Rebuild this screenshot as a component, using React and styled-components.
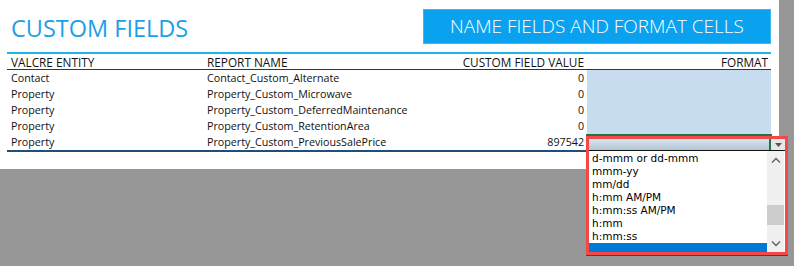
import React from "react";
import styled, { createGlobalStyle } from "styled-components";

const Global = createGlobalStyle`
  html, body { margin: 0; padding: 0; }
  body {
    background: #979797;
    width: 794px;
    height: 266px;
    overflow: hidden;
    font-family: "Open Sans", "Liberation Sans", sans-serif;
  }
`;

const Sheet = styled.div`
  position: relative;
  width: 779px;
  height: 169px;
  background: #ffffff;
`;

const TitleRow = styled.div`
  display: flex;
  align-items: flex-start;
  height: 52px;
  padding-left: 11px;
  padding-right: 8px;
`;

const Title = styled.h1`
  margin: 15px 0 0;
  font-family: "Open Sans", sans-serif;
  font-weight: 400;
  font-size: 23.5px;
  line-height: 26px;
  color: #1d9fe6;
`;

const ActionButton = styled.div`
  margin-left: auto;
  margin-top: 9px;
  width: 348px;
  height: 35px;
  display: flex;
  align-items: center;
  justify-content: center;
  background: #0aa2ef;
  border: 1px solid #3db6f2;
  box-sizing: border-box;
  color: #ffffff;
  font-family: "Open Sans", sans-serif;
  font-size: 19px;
  font-weight: 300;
  padding-bottom: 2px;
`;

const Table = styled.div`
  margin-left: 7px;
  width: 764px;
  border-top: 2px solid #1fb2ec;
  border-bottom: 2px solid #1f4e79;
`;

const Row = styled.div`
  display: grid;
  grid-template-columns: 196px 217px 167px 184px;
  height: ${(p) => (p.head ? "15px" : "16px")};
  border-bottom: ${(p) => (p.head ? "1px solid #1f3b5c" : "none")};
  font-family: "Open Sans", sans-serif;
  font-size: ${(p) => (p.head ? "11.8px" : "10.7px")};
  font-weight: ${(p) => (p.head ? 500 : 400)};
  color: #111;
`;

const Cell = styled.div`
  display: flex;
  align-items: center;
  padding: 0 3px 0 4px;
  white-space: nowrap;
  overflow: hidden;
  justify-content: ${(p) => (p.right ? "flex-end" : "flex-start")};
  background: ${(p) => (p.fill ? "#c7dcee" : "transparent")};
  text-transform: ${(p) => (p.head ? "uppercase" : "none")};
`;

const Callout = styled.div`
  position: absolute;
  left: 586px;
  top: 136px;
  width: 202px;
  height: 119px;
  box-sizing: border-box;
  border: 3px solid #f24848;
  background: #ffffff;
  box-shadow: 0 1px 0 #444;
  display: flex;
  flex-direction: column;
`;

const Selection = styled.div`
  position: absolute;
  left: 586px;
  top: 134px;
  width: 186px;
  height: 17px;
  box-sizing: border-box;
  border: 2px solid #217346;
`;

const Combo = styled.div`
  display: flex;
  height: 11px;
  border-bottom: 1px solid #111;
`;

const ComboField = styled.div`
  position: relative;
  flex: 1;
  background: linear-gradient(#d8e4ee, #b3c5d3);
  border-right: 2px solid #217346;
`;

const ComboArrow = styled.div`
  width: 14px;
  display: flex;
  align-items: center;
  justify-content: center;
  background: #e6e6e6;
`;

const List = styled.div`
  flex: 1;
  display: flex;
  overflow: hidden;
`;

const Items = styled.div`
  flex: 1;
  padding-top: 1px;
  overflow: hidden;
`;

const Item = styled.div`
  height: 13px;
  line-height: 13px;
  padding-left: 3px;
  font-family: "DejaVu Sans", Tahoma, sans-serif;
  font-size: 10.5px;
  color: #000;
  background: ${(p) => (p.active ? "#0078d7" : "transparent")};
`;

const ScrollBar = styled.div`
  width: 17px;
  margin-right: 1px;
  background: #f0f0f0;
  display: flex;
  flex-direction: column;
`;

const ScrollButton = styled.div`
  height: 17px;
  display: flex;
  align-items: center;
  justify-content: center;
`;

const Track = styled.div`
  flex: 1;
  display: flex;
  flex-direction: column;
  justify-content: flex-end;
  padding-bottom: 10px;
`;

const Thumb = styled.div`
  height: 20px;
  background: #cdcdcd;
`;

const rows = [
  ["Contact", "Contact_Custom_Alternate", "0"],
  ["Property", "Property_Custom_Microwave", "0"],
  ["Property", "Property_Custom_DeferredMaintenance", "0"],
  ["Property", "Property_Custom_RetentionArea", "0"],
  ["Property", "Property_Custom_PreviousSalePrice", "897542"],
];

const formats = [
  "d-mmm or dd-mmm",
  "mmm-yy",
  "mm/dd",
  "h:mm AM/PM",
  "h:mm:ss AM/PM",
  "h:mm",
  "h:mm:ss",
  "",
];

const Chevron = ({ up }) => (
  <svg width="10" height="6" viewBox="0 0 10 6">
    <path
      d={up ? "M1 5.5 L5 1.5 L9 5.5" : "M1 0.5 L5 4.5 L9 0.5"}
      fill="none"
      stroke="#606060"
      strokeWidth="1.4"
    />
  </svg>
);

export default function App() {
  return (
    <>
      <Global />
      <Sheet>
        <TitleRow>
          <Title>CUSTOM FIELDS</Title>
          <ActionButton>NAME FIELDS AND FORMAT CELLS</ActionButton>
        </TitleRow>
        <Table>
          <Row head>
            <Cell head>Valcre Entity</Cell>
            <Cell head>Report Name</Cell>
            <Cell head right>Custom Field Value</Cell>
            <Cell head right>Format</Cell>
          </Row>
          {rows.map((r, i) => (
            <Row key={i}>
              <Cell>{r[0]}</Cell>
              <Cell>{r[1]}</Cell>
              <Cell right>{r[2]}</Cell>
              <Cell fill={i < 4} />
            </Row>
          ))}
        </Table>
        <Selection />
        <Callout>
          <Combo>
            <ComboField />
            <ComboArrow>
              <svg width="7" height="4" viewBox="0 0 7 4">
                <path d="M0 0 H7 L3.5 4 Z" fill="#555" />
              </svg>
            </ComboArrow>
          </Combo>
          <List>
            <Items>
              {formats.map((f, i) => (
                <Item key={i} active={i === formats.length - 1}>
                  {f}
                </Item>
              ))}
            </Items>
            <ScrollBar>
              <ScrollButton>
                <Chevron up />
              </ScrollButton>
              <Track>
                <Thumb />
              </Track>
              <ScrollButton>
                <Chevron />
              </ScrollButton>
            </ScrollBar>
          </List>
        </Callout>
      </Sheet>
    </>
  );
}
